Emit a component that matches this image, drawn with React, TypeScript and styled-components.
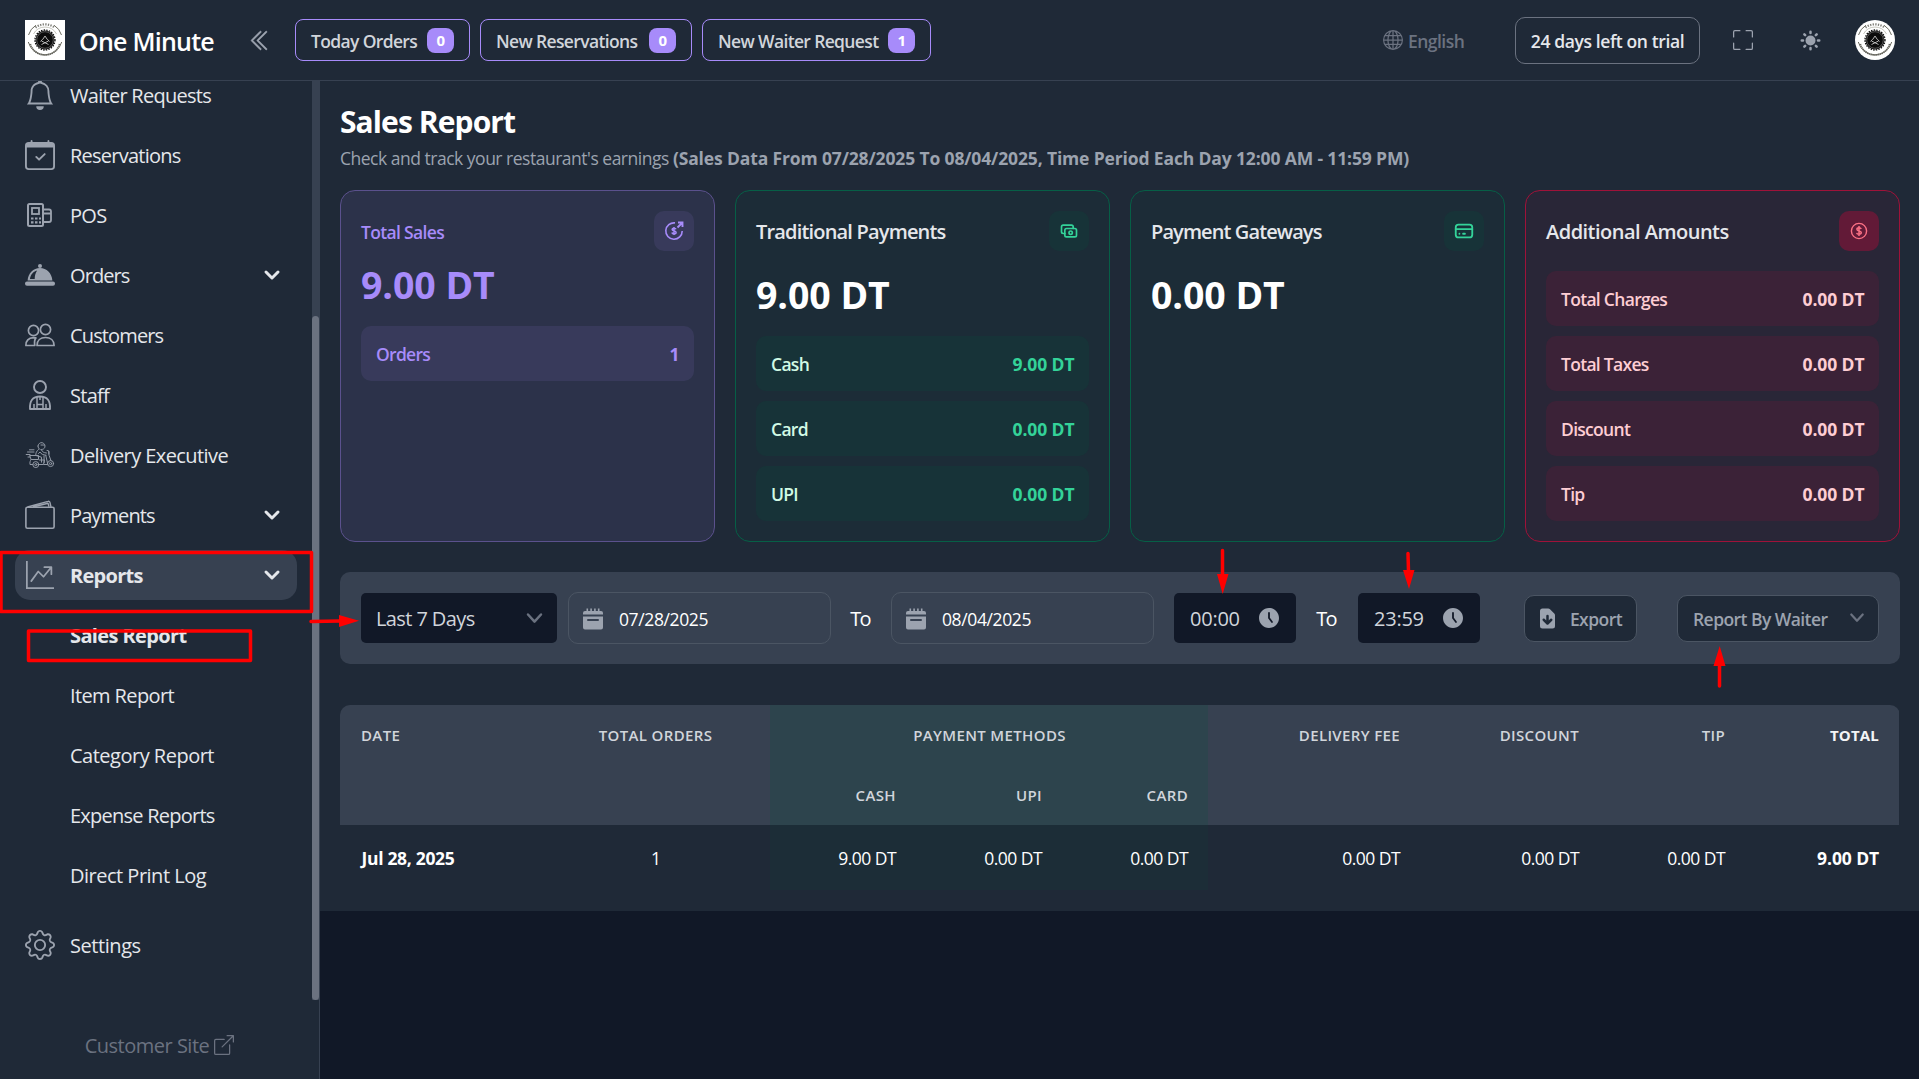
import React from 'react';
import styled, { createGlobalStyle, css } from 'styled-components';
import {
  BsBell, BsCalendarCheck, BsGear, BsGlobe, BsFullscreen, BsBoxArrowUpRight, BsGraphUpArrow, BsChevronDoubleLeft,
} from 'react-icons/bs';
import { TbCash, TbCreditCard } from 'react-icons/tb';

const GlobalStyle = createGlobalStyle`
  *, *::before, *::after { box-sizing: border-box; }
  html, body { margin: 0; padding: 0; height: 100%; overflow: hidden; background: #111827; }
  body {
    font-family: "Open Sans", "Noto Sans", "Liberation Sans", sans-serif;
    font-size: 17.5px;
    letter-spacing: -0.03em;
    color: #fff;
  }
  svg { display: block; flex: none; }
`;

const Page = styled.div`
  position: relative;
  width: 1919px;
  height: 1079px;
  display: flex;
  flex-direction: column;
  overflow: hidden;
`;

/* ---------- header ---------- */
const Header = styled.header`
  height: 81px;
  flex: none;
  display: flex;
  align-items: center;
  justify-content: space-between;
  padding: 0 24px 0 25px;
  background: #1f2937;
  border-bottom: 1px solid #374151;
`;
const HeaderSide = styled.div`
  display: flex;
  align-items: center;
`;
const Brand = styled.div`
  width: 169px;
  margin-left: 14px;
  padding-top: 2px;
  font-size: 25px;
  line-height: 30px;
  font-weight: 600;
  letter-spacing: -0.03em;
  white-space: nowrap;
`;
const Collapse = styled.div`
  width: 47px;
  padding-left: 1px;
  color: #9ca3af;
  svg { stroke: currentColor; stroke-width: 0.4; }
`;
const HeaderButton = styled.div<{ $w: number }>`
  width: ${(p) => p.$w}px;
  height: 42px;
  margin-right: 10px;
  padding: 0 15px;
  display: flex;
  align-items: center;
  justify-content: space-between;
  border: 1px solid #a78bfa;
  border-radius: 8px;
  color: #d1d5db;
  font-weight: 600;
  letter-spacing: -0.037em;
  white-space: nowrap;
`;
const ButtonText = styled.span`
  padding-top: 1px;
`;
const Badge = styled.span`
  height: 25px;
  padding: 0 9.5px;
  border-radius: 8px;
  background: #a78bfa;
  color: #fff;
  font-size: 15px;
  line-height: 25px;
  font-weight: 700;
`;
const Language = styled.div`
  display: flex;
  align-items: center;
  gap: 5px;
  width: 132px;
  color: #6b7280;
  font-weight: 600;
  letter-spacing: -0.03em;
`;
const Trial = styled.div`
  width: 185px;
  height: 47px;
  padding-top: 2px;
  display: flex;
  align-items: center;
  justify-content: center;
  border: 1px solid #6b7280;
  border-radius: 10px;
  color: #e5e7eb;
  font-weight: 600;
  letter-spacing: -0.022em;
  white-space: nowrap;
`;
const HeaderIcon = styled.div<{ $ml: number }>`
  margin-left: ${(p) => p.$ml}px;
  color: #9ca3af;
`;

/* ---------- sidebar ---------- */
const Body = styled.div`
  flex: 1;
  min-height: 0;
  display: flex;
`;
const Sidebar = styled.aside`
  width: 320px;
  flex: none;
  display: flex;
  flex-direction: column;
  background: #1f2937;
  border-right: 1px solid #374151;
`;
const NavScroll = styled.div`
  height: 919px;
  display: flex;
  overflow: hidden;
`;
const NavList = styled.nav`
  flex: 1;
  display: flex;
  flex-direction: column;
  gap: 10px;
  margin-top: -11px;
  padding: 0 15px;
`;
const NavItem = styled.div<{ $active?: boolean; $bold?: boolean; $gapTop?: number; $track?: number }>`
  width: 282px;
  height: 50px;
  flex: none;
  margin-top: ${(p) => p.$gapTop ?? 0}px;
  padding: 0 10px;
  display: flex;
  align-items: center;
  border-radius: 15px;
  background: ${(p) => (p.$active ? '#374151' : 'transparent')};
  color: #e5e7eb;
  font-size: 20px;
  font-weight: ${(p) => (p.$active || p.$bold ? 700 : 400)};
  letter-spacing: ${(p) => p.$track ?? -0.036}em;
  white-space: nowrap;
`;
const NavIcon = styled.span`
  width: 30px;
  height: 30px;
  margin-right: 15px;
  display: flex;
  align-items: center;
  justify-content: center;
  color: #9ca3af;
`;
const NavLabel = styled.span`
  flex: 1;
  padding-top: 1px;
`;
const ScrollTrack = styled.div`
  width: 8px;
  flex: none;
  padding-top: 235px;
  background: #374151;
`;
const ScrollThumb = styled.div`
  height: 684px;
  width: 7px;
  border-radius: 4px;
  background: #6b7280;
`;
const SidebarFooter = styled.div`
  flex: 1;
  padding-top: 11px;
  display: flex;
  align-items: center;
  justify-content: center;
  gap: 5px;
  color: #6b7280;
  font-size: 20px;
  letter-spacing: -0.025em;
`;

/* ---------- main ---------- */
const Main = styled.main`
  flex: 1;
  min-width: 0;
`;
const Content = styled.div`
  height: 830px;
  padding: 20px 19px 0 20px;
  background: #1f2937;
`;
const Title = styled.h1`
  margin: 0;
  padding-top: 1px;
  height: 40px;
  font-size: 30px;
  line-height: 40px;
  font-weight: 700;
  letter-spacing: -0.03em;
`;
const Subtitle = styled.p`
  margin: 4px 0 19px;
  height: 26px;
  line-height: 26px;
  color: #9ca3af;
  letter-spacing: -0.028em;
  white-space: nowrap;
  b { font-weight: 700; letter-spacing: -0.008em; }
`;
const Cards = styled.div`
  display: grid;
  grid-template-columns: repeat(4, 375px);
  gap: 20px;
`;

type Tone = 'violet' | 'green' | 'rose';
const tones = {
  violet: { bg: 'rgba(167,139,250,.1)', border: '#5b518d', row: 'rgba(167,139,250,.1)', box: 'rgba(167,139,250,.1)', icon: '#a78bfa', title: '#a78bfa', label: '#a78bfa', value: '#a78bfa' },
  green: { bg: 'rgba(6,78,59,.1)', border: '#065f46', row: 'rgba(6,78,59,.2)', box: 'rgba(6,78,59,.2)', icon: '#34d399', title: '#e5e7eb', label: '#d1fae5', value: '#34d399' },
  rose: { bg: 'rgba(136,19,55,.1)', border: '#9f1239', row: 'rgba(136,19,55,.2)', box: 'rgba(136,19,55,.6)', icon: '#fb7185', title: '#e5e7eb', label: '#fecdd3', value: '#fecdd3' },
};
const Card = styled.section<{ $tone: Tone }>`
  height: 352px;
  padding: 20px;
  border: 1px solid ${(p) => tones[p.$tone].border};
  border-radius: 15px;
  background: ${(p) => tones[p.$tone].bg};
`;
const CardHead = styled.div<{ $tight?: boolean }>`
  height: 40px;
  margin-bottom: ${(p) => (p.$tight ? 10 : 20)}px;
  display: flex;
  align-items: center;
  justify-content: space-between;
`;
const CardTitle = styled.h3<{ $tone: Tone; $track: number }>`
  margin: 0;
  padding-top: ${(p) => (p.$tone === 'violet' ? 2 : 0)}px;
  font-size: ${(p) => (p.$tone === 'violet' ? 17.5 : 20)}px;
  font-weight: 600;
  letter-spacing: ${(p) => p.$track}em;
  color: ${(p) => tones[p.$tone].title};
`;
const IconBox = styled.div<{ $tone: Tone }>`
  width: 40px;
  height: 40px;
  display: flex;
  align-items: center;
  justify-content: center;
  border-radius: 10px;
  background: ${(p) => tones[p.$tone].box};
  color: ${(p) => tones[p.$tone].icon};
`;
const Amount = styled.div<{ $violet?: boolean }>`
  height: 45px;
  margin-bottom: 20px;
  font-size: 37.5px;
  line-height: 47px;
  font-weight: 700;
  letter-spacing: -0.002em;
  color: ${(p) => (p.$violet ? '#a78bfa' : '#fff')};
`;
const Rows = styled.div`
  display: flex;
  flex-direction: column;
  gap: 10px;
`;
const Row = styled.div<{ $tone: Tone }>`
  height: 55px;
  padding: 0 14.5px 0 15px;
  display: flex;
  align-items: center;
  justify-content: space-between;
  border-radius: 10px;
  background: ${(p) => tones[p.$tone].row};
  color: ${(p) => tones[p.$tone].label};
  font-weight: 600;
  letter-spacing: -0.04em;
  b { font-weight: 700; letter-spacing: -0.005em; color: ${(p) => tones[p.$tone].value}; }
`;

/* ---------- filters ---------- */
const FilterBar = styled.div`
  height: 92px;
  margin: 30px 0 41px;
  padding: 0 20px 0 21px;
  display: flex;
  align-items: center;
  border-radius: 10px;
  background: #374151;
`;
const field = css`
  display: flex;
  align-items: center;
  white-space: nowrap;
`;
const DarkField = styled.div<{ $w: number; $pl: number; $pr: number; $track: number }>`
  ${field}
  width: ${(p) => p.$w}px;
  height: 50px;
  padding: 0 ${(p) => p.$pr}px 0 ${(p) => p.$pl}px;
  justify-content: space-between;
  border-radius: 5px;
  background: #111827;
  color: #d1d5db;
  font-size: 20px;
  letter-spacing: ${(p) => p.$track}em;
`;
const DateField = styled.div`
  ${field}
  width: 263px;
  height: 52px;
  padding-left: 14px;
  gap: 16px;
  border: 1px solid #4b5563;
  border-radius: 10px;
  color: #fff;
  letter-spacing: -0.022em;
  svg { color: #9ca3af; }
  span { padding-top: 1px; }
`;
const To = styled.span<{ $w: number }>`
  width: ${(p) => p.$w}px;
  padding-right: 2px;
  text-align: center;
  font-size: 20px;
  letter-spacing: -0.09em;
`;
const Spacer = styled.div<{ $w: number }>`
  width: ${(p) => p.$w}px;
  flex: none;
`;
const OutlineButton = styled.div<{ $w: number; $pl: number; $pr: number }>`
  ${field}
  width: ${(p) => p.$w}px;
  height: 47px;
  padding: 0 ${(p) => p.$pr}px 0 ${(p) => p.$pl}px;
  justify-content: space-between;
  border: 1px solid #4b5563;
  border-radius: 10px;
  background: #1f2937;
  color: #9ca3af;
  font-weight: 600;
  letter-spacing: -0.032em;
`;

/* ---------- table ---------- */
const TableWrap = styled.div`
  border-radius: 10px 10px 0 0;
  overflow: hidden;
`;
const Table = styled.table`
  width: 1559px;
  table-layout: fixed;
  border-collapse: collapse;
`;
const Th = styled.th<{ $align?: string; $green?: boolean; $strong?: boolean }>`
  height: 60px;
  padding: 0 20px 0 21px;
  background: ${(p) => (p.$green ? '#2d444d' : '#374151')};
  color: ${(p) => (p.$strong ? '#f3f4f6' : '#d1d5db')};
  font-size: 15px;
  font-weight: ${(p) => (p.$strong ? 700 : 600)};
  letter-spacing: ${(p) => (p.$strong ? 0.012 : 0.024)}em;
  text-transform: uppercase;
  text-align: ${(p) => p.$align ?? 'right'};
`;
const Td = styled.td<{ $align?: string; $green?: boolean; $strong?: boolean }>`
  height: 65px;
  padding: 1px 20px 0 21.5px;
  background: ${(p) => (p.$green ? '#1c2d37' : 'transparent')};
  font-weight: ${(p) => (p.$strong ? 700 : 400)};
  letter-spacing: ${(p) => (p.$strong ? (p.$align ? '-0.018em' : '-0.006em') : '-0.03em')};
  text-align: ${(p) => p.$align ?? 'right'};
  white-space: nowrap;
`;

/* ---------- annotations laid over the page ---------- */
const Marks = styled.svg`
  position: absolute;
  inset: 0;
  pointer-events: none;
`;

/* ---------- drawings ---------- */
const Logo = ({ round }: { round?: boolean }) => (
  <svg width="40" height="40" viewBox="0 0 40 40" fill="none">
    {round ? <circle cx="20" cy="20" r="20" fill="#fff" /> : <rect width="40" height="40" fill="#fff" />}
    <path d="M3.500 15A17.300 17.300 0 0 1 11 5.200M29 5.200A17.300 17.300 0 0 1 36.500 15M3.300 22a17.300 17.300 0 0 0 33.400 0" stroke="#6d6d62" strokeWidth="1" />
    <path d="M10.500 7.500a15.800 15.800 0 0 1 19 0" stroke="#7f7f78" strokeWidth="2.200" strokeDasharray="1.300 1.300" />
    <path d="M5.300 24a15.300 15.300 0 0 0 29.400 0" stroke="#66665f" strokeWidth="1.800" strokeDasharray="1.200 .7" />
    <path d="M8.500 14a13 13 0 0 1 23 0" stroke="#b9b9ae" strokeWidth=".8" />
    <circle cx="20" cy="20" r="9.500" fill="#0b0b0b" />
    <circle cx="20" cy="20" r="10" stroke="#0b0b0b" strokeWidth="1.300" strokeDasharray="1.500 1.170" />
    <circle cx="20" cy="20" r="8.300" stroke="#888" strokeWidth=".6" />
    <path d="M15.500 21.500l2.200-2.300M24.500 21.500l-2.200-2.300M17.800 19.300l2.200-3.300 2.200 3.300M16.500 24.500l7-3.500M23.500 24.500l-7-3.500" stroke="#c4c4c4" strokeWidth=".9" />
  </svg>
);
const PosIcon = () => (
  <svg width="30" height="30" viewBox="0 0 30 30" fill="none" stroke="currentColor">
    <rect x="3" y="4" width="15" height="22" rx="1.500" strokeWidth="2" />
    <rect x="7" y="8" width="7" height="6" strokeWidth="1.800" />
    <path d="M6 18.500h2.500M10 18.500h2.500M14 18.500h2M6 22.300h2.500M10 22.300h2.500M14 22.300h2" strokeWidth="2.200" />
    <path d="M18.500 9.500H24a2 2 0 0 1 2 2v8.500a2 2 0 0 1-2 2h-5.500M19 13.500h7" strokeWidth="1.800" />
  </svg>
);
const DishIcon = () => (
  <svg width="30" height="30" viewBox="0 0 30 30" fill="currentColor">
    <circle cx="15" cy="6" r="2" />
    <rect x="0" y="21.500" width="30" height="4.300" rx="2" />
    <path fillRule="evenodd" d="M2.600 20.500C3.200 13.200 8.300 8 15 8s11.800 5.200 12.400 12.500zM5 19h4.700c0-3.200.7-6 2.400-8.600C8 11.500 5.400 14.900 5 19z" />
  </svg>
);
const CustomersIcon = () => (
  <svg width="30" height="30" viewBox="0 0 30 30" fill="none" stroke="currentColor" strokeWidth="1.700" strokeLinejoin="round">
    <circle cx="8.500" cy="10.500" r="5.100" />
    <circle cx="20.500" cy="9.500" r="5.100" />
    <path d="M12 25.500c0-5 3.500-8 8.500-8s8.600 3 8.600 8z" />
    <path d="M9.800 25.500H.9c0-4.800 2.600-7.500 7.600-7.800.9 0 1.700 0 2.400.2-1.400 1.700-1.600 4.600-1.100 7.600z" />
  </svg>
);
const StaffIcon = () => (
  <svg width="30" height="30" viewBox="0 0 30 30" fill="none" stroke="currentColor" strokeWidth="1.900" strokeLinejoin="round">
    <circle cx="15" cy="7" r="6" />
    <path d="M5 29c-.5-8 2.500-12.500 10-12.500S25.500 21 25 29z" />
    <path d="M12 17v12M18 17v12M12 24.500h6M15 17v3M9 24v5M21 24v5" strokeWidth="1.500" />
  </svg>
);
const ScooterIcon = () => (
  <svg width="30" height="30" viewBox="0 0 30 30" fill="none" stroke="currentColor" strokeWidth="1" opacity=".92" strokeLinecap="round" strokeLinejoin="round">
    <path d="M13 6a3.500 3.500 0 1 1 6.800 1.300c-.5 1.500-1.800 2.200-3.300 2.200M16 5h3.500M13 6c0 1.700.8 3 2.200 3.500" />
    <path d="M13.500 9.500c-2 1.500-2.900 3.700-2.700 6l5.700 1.700v5M16.500 10c1 2 1.800 2.600 5 3M13.500 13.500l1.500-1.500c1 2 3 3 6 3.200M19 16l.2 6.500" />
    <path d="M22 10.500l1.500.2.500 4.500 2 5.500M24 11.500v2.500M20.800 15.500l2 9H19" />
    <path d="M5 15.500h8.500v4H6.500zM6 19.500c-1 1.500-1.200 3-1 5h3M13.500 24.500h5l1-4.500h-5" />
    <circle cx="10.800" cy="24.600" r="3" /><circle cx="10.800" cy="24.600" r="1.100" />
    <circle cx="25.600" cy="23.600" r="3" /><circle cx="25.600" cy="23.600" r="1.100" />
    <path d="M2.500 12H9M4.500 9.800H9M1.200 14.500H5M3 17h2" />
  </svg>
);
const WalletIcon = () => (
  <svg width="30" height="30" viewBox="0 0 30 30" fill="none" stroke="currentColor" strokeWidth="1.600" strokeLinejoin="round">
    <rect x=".9" y="7.200" width="28.200" height="21" rx="1.500" />
    <path d="M2.500 7 23 1.400c1-.3 1.700.2 2 1.200L26 7M8 7l15-3.700 1 3.500" strokeWidth="1.400" />
  </svg>
);
const Chevron = ({ size = 30 }: { size?: number }) => (
  <svg width={size} height={size} viewBox="0 0 20 20" fill="currentColor">
    <path fillRule="evenodd" d="M5.293 7.293a1 1 0 011.414 0L10 10.586l3.293-3.293a1 1 0 111.414 1.414l-4 4a1 1 0 01-1.414 0l-4-4a1 1 0 010-1.414z" />
  </svg>
);
const SelectArrow = ({ size = 25 }: { size?: number }) => (
  <svg width={size} height={size} viewBox="0 0 20 20" fill="none" stroke="#6b7280" strokeWidth="2" strokeLinecap="round" strokeLinejoin="round">
    <path d="m4.800 6.800 5.200 5.700 5.200-5.700" />
  </svg>
);
const SunIcon = () => (
  <svg width="25" height="25" viewBox="0 0 20 20" fill="currentColor">
    <path fillRule="evenodd" d="M10 2a1 1 0 011 1v1a1 1 0 11-2 0V3a1 1 0 011-1zm4 8a4 4 0 11-8 0 4 4 0 018 0zm-.464 4.950l.707.707a1 1 0 001.414-1.414l-.707-.707a1 1 0 00-1.414 1.414zm2.120-10.607a1 1 0 010 1.414l-.706.707a1 1 0 11-1.414-1.414l.707-.707a1 1 0 011.414 0zM17 11a1 1 0 100-2h-1a1 1 0 100 2h1zm-7 4a1 1 0 011 1v1a1 1 0 11-2 0v-1a1 1 0 011-1zM5.050 6.464A1 1 0 106.465 5.050l-.708-.707a1 1 0 00-1.414 1.414l.707.707zm1.414 8.486l-.707.707a1 1 0 01-1.414-1.414l.707-.707a1 1 0 011.414 1.414zM4 11a1 1 0 100-2H3a1 1 0 000 2h1z" />
  </svg>
);
const CalendarIcon = () => (
  <svg width="20" height="23" viewBox="0 -1.500 20 23" fill="currentColor">
    <path d="M20 4.500a2 2 0 0 0-2-2h-1.500V0h-1.600v2.500h-2.200V0h-1.600v2.500H8.900V0H7.300v2.500H5.100V0H3.500v2.500H2a2 2 0 0 0-2 2V6h20zM0 8v11a2 2 0 0 0 2 2h16a2 2 0 0 0 2-2V8zm5 2.500h10a1 1 0 0 1 0 2H5a1 1 0 0 1 0-2z" fillRule="evenodd" />
  </svg>
);
const ClockIcon = () => (
  <svg width="24" height="24" viewBox="0 0 24 24" fill="#9ca3af">
    <path fillRule="evenodd" d="M2 12C2 6.477 6.477 2 12 2s10 4.477 10 10-4.477 10-10 10S2 17.523 2 12Zm10.900-5a.9.9 0 1 0-1.800 0v5a.9.9 0 0 0 .200.600l3 4a.9.9 0 0 0 1.400-1.100L12.900 11.700V7Z" />
  </svg>
);
const ExportIcon = () => (
  <svg width="25" height="25" viewBox="0 0 20 20" fill="currentColor">
    <path fillRule="evenodd" d="M6 2a2 2 0 00-2 2v12a2 2 0 002 2h8a2 2 0 002-2V7.414A2 2 0 0015.414 6L12 2.586A2 2 0 0010.586 2H6zm5 6a1 1 0 10-2 0v3.586l-1.293-1.293a1 1 0 10-1.414 1.414l3 3a1 1 0 001.414 0l3-3a1 1 0 00-1.414-1.414L11 11.586V8z" />
  </svg>
);
const SalesIcon = () => (
  <svg width="20" height="20" viewBox="0 0 20 20" fill="none" stroke="currentColor" strokeWidth="1.600">
    <path d="M11 1.900A8.200 8.200 0 1 0 18.200 10" />
    <path d="M13.500 6.500 17.500 2.500M14 1.500h4.500V6" strokeWidth="1.900" />
    <path d="M12 8.300c-.3-.9-1-1.100-2-1.100-1.200 0-1.900.5-1.900 1.400 0 2 4 .8 4 2.800 0 1-.9 1.400-2.100 1.400-1.100 0-1.900-.4-2.100-1.300M10 6v8" strokeWidth="1.500" />
  </svg>
);
const CoinIcon = () => (
  <svg width="20" height="20" viewBox="0 0 20 20" fill="none" stroke="currentColor" strokeWidth="1.400">
    <circle cx="10" cy="10" r="7.600" />
    <path d="M12.200 8c-.3-1-1.100-1.300-2.200-1.300-1.300 0-2.100.6-2.100 1.600 0 2.200 4.400 1 4.400 3.300 0 1.100-1 1.700-2.300 1.700S7.900 12.800 7.700 11.800M10 5v10" strokeWidth="1.500" />
  </svg>
);

type NavEntry = { label: string; icon?: React.ReactNode; chevron?: boolean; active?: boolean; bold?: boolean; gap?: number; track?: number };
const nav: NavEntry[] = [
  { label: 'Waiter Requests', icon: <BsBell size={30} /> },
  { label: 'Reservations', icon: <BsCalendarCheck size={30} />, track: -0.038 },
  { label: 'POS', icon: <PosIcon /> },
  { label: 'Orders', icon: <DishIcon />, chevron: true, track: -0.046 },
  { label: 'Customers', icon: <CustomersIcon />, track: -0.043 },
  { label: 'Staff', icon: <StaffIcon /> },
  { label: 'Delivery Executive', icon: <ScooterIcon />, track: -0.029 },
  { label: 'Payments', icon: <WalletIcon />, chevron: true, track: -0.045 },
  { label: 'Reports', icon: <BsGraphUpArrow size={28} />, chevron: true, active: true },
  { label: 'Sales Report', bold: true, track: -0.031 },
  { label: 'Item Report', track: -0.031 },
  { label: 'Category Report', track: -0.025 },
  { label: 'Expense Reports', track: -0.038 },
  { label: 'Direct Print Log', track: -0.025 },
  { label: 'Settings', icon: <BsGear size={30} />, gap: 10, track: -0.022 },
];

const CardRows = ({ tone, items }: { tone: Tone; items: [string, string][] }) => (
  <Rows>
    {items.map(([k, v]) => (
      <Row key={k} $tone={tone}><span>{k}</span><b>{v}</b></Row>
    ))}
  </Rows>
);

export default function App() {
  return (
    <Page>
      <GlobalStyle />
      <Header>
        <HeaderSide>
          <Logo />
          <Brand>One Minute</Brand>
          <Collapse><BsChevronDoubleLeft size={23} /></Collapse>
          <HeaderButton $w={175}><ButtonText>Today Orders</ButtonText><Badge>0</Badge></HeaderButton>
          <HeaderButton $w={212}><ButtonText>New Reservations</ButtonText><Badge>0</Badge></HeaderButton>
          <HeaderButton $w={229}><ButtonText>New Waiter Request</ButtonText><Badge>1</Badge></HeaderButton>
        </HeaderSide>
        <HeaderSide>
          <Language><BsGlobe size={20} /><ButtonText>English</ButtonText></Language>
          <Trial>24 days left on trial</Trial>
          <HeaderIcon $ml={33}><BsFullscreen size={20} /></HeaderIcon>
          <HeaderIcon $ml={45}><SunIcon /></HeaderIcon>
          <HeaderIcon $ml={32}><Logo round /></HeaderIcon>
        </HeaderSide>
      </Header>
      <Body>
        <Sidebar>
          <NavScroll>
            <NavList>
              {nav.map((n) => (
                <NavItem key={n.label} $active={n.active} $bold={n.bold} $gapTop={n.gap} $track={n.track}>
                  <NavIcon>{n.icon}</NavIcon>
                  <NavLabel>{n.label}</NavLabel>
                  {n.chevron && <Chevron />}
                </NavItem>
              ))}
            </NavList>
            <ScrollTrack><ScrollThumb /></ScrollTrack>
          </NavScroll>
          <SidebarFooter>Customer Site<BsBoxArrowUpRight size={20} /></SidebarFooter>
        </Sidebar>
        <Main>
          <Content>
            <Title>Sales Report</Title>
            <Subtitle>
              Check and track your restaurant's earnings <b>(Sales Data From 07/28/2025 To 08/04/2025, Time Period Each Day 12:00 AM - 11:59 PM)</b>
            </Subtitle>
            <Cards>
              <Card $tone="violet">
                <CardHead $tight><CardTitle $tone="violet" $track={-0.038}>Total Sales</CardTitle><IconBox $tone="violet"><SalesIcon /></IconBox></CardHead>
                <Amount $violet>9.00 DT</Amount>
                <CardRows tone="violet" items={[['Orders', '1']]} />
              </Card>
              <Card $tone="green">
                <CardHead><CardTitle $tone="green" $track={-0.041}>Traditional Payments</CardTitle><IconBox $tone="green"><TbCash size={20} /></IconBox></CardHead>
                <Amount>9.00 DT</Amount>
                <CardRows tone="green" items={[['Cash', '9.00 DT'], ['Card', '0.00 DT'], ['UPI', '0.00 DT']]} />
              </Card>
              <Card $tone="green">
                <CardHead><CardTitle $tone="green" $track={-0.045}>Payment Gateways</CardTitle><IconBox $tone="green"><TbCreditCard size={22} /></IconBox></CardHead>
                <Amount>0.00 DT</Amount>
              </Card>
              <Card $tone="rose">
                <CardHead><CardTitle $tone="rose" $track={-0.026}>Additional Amounts</CardTitle><IconBox $tone="rose"><CoinIcon /></IconBox></CardHead>
                <CardRows tone="rose" items={[['Total Charges', '0.00 DT'], ['Total Taxes', '0.00 DT'], ['Discount', '0.00 DT'], ['Tip', '0.00 DT']]} />
              </Card>
            </Cards>
            <FilterBar>
              <DarkField $w={196} $pl={15} $pr={10} $track={-0.03}>Last 7 Days<SelectArrow size={25} /></DarkField>
              <Spacer $w={11} />
              <DateField><CalendarIcon /><span>07/28/2025</span></DateField>
              <To $w={60}>To</To>
              <DateField><CalendarIcon /><span>08/04/2025</span></DateField>
              <Spacer $w={20} />
              <DarkField $w={122} $pl={16} $pr={15} $track={-0.012}>00:00<ClockIcon /></DarkField>
              <To $w={62}>To</To>
              <DarkField $w={122} $pl={16} $pr={15} $track={-0.012}>23:59<ClockIcon /></DarkField>
              <Spacer $w={44} />
              <OutlineButton $w={113} $pl={10} $pr={14}><ExportIcon /><ButtonText>Export</ButtonText></OutlineButton>
              <Spacer $w={40} />
              <OutlineButton $w={202} $pl={15} $pr={10}><ButtonText>Report By Waiter</ButtonText><SelectArrow size={22} /></OutlineButton>
            </FilterBar>
            <TableWrap>
              <Table>
                <colgroup>
                  <col width={200} /><col width={230} /><col width={146} /><col width={146} /><col width={146} />
                  <col width={212} /><col width={179} /><col width={146} /><col width={154} />
                </colgroup>
                <thead>
                  <tr>
                    <Th $align="left">Date</Th><Th $align="center">Total Orders</Th>
                    <Th $align="center" $green colSpan={3}>Payment Methods</Th>
                    <Th>Delivery Fee</Th><Th>Discount</Th><Th>Tip</Th><Th $strong>Total</Th>
                  </tr>
                  <tr>
                    <Th /><Th /><Th $green>Cash</Th><Th $green>UPI</Th><Th $green>Card</Th><Th /><Th /><Th /><Th />
                  </tr>
                </thead>
                <tbody>
                  <tr>
                    <Td $align="left" $strong>Jul 28, 2025</Td><Td $align="center">1</Td>
                    <Td $green>9.00 DT</Td><Td $green>0.00 DT</Td><Td $green>0.00 DT</Td>
                    <Td>0.00 DT</Td><Td>0.00 DT</Td><Td>0.00 DT</Td><Td $strong>9.00 DT</Td>
                  </tr>
                </tbody>
              </Table>
            </TableWrap>
          </Content>
        </Main>
      </Body>
      <Marks width="1919" height="1079" viewBox="0 0 1919 1079" fill="none" stroke="#f00" strokeWidth="3.500" strokeLinecap="round" strokeLinejoin="round">
        <rect x="1" y="552.500" width="310.500" height="59" />
        <rect x="28.500" y="631" width="222" height="29.500" />
        <path d="M311 621.500 340 621M1222.500 550.500V575M1408 553.500l.5 18M1719.500 686V665" />
        <path d="M339 615l20 5.700-20 6.300zM1217 574h11.500l-5.800 20zM1403 570h11.500l-5.500 19zM1713.500 666h12l-5.800-20z" fill="#f00" stroke="none" />
      </Marks>
    </Page>
  );
}
